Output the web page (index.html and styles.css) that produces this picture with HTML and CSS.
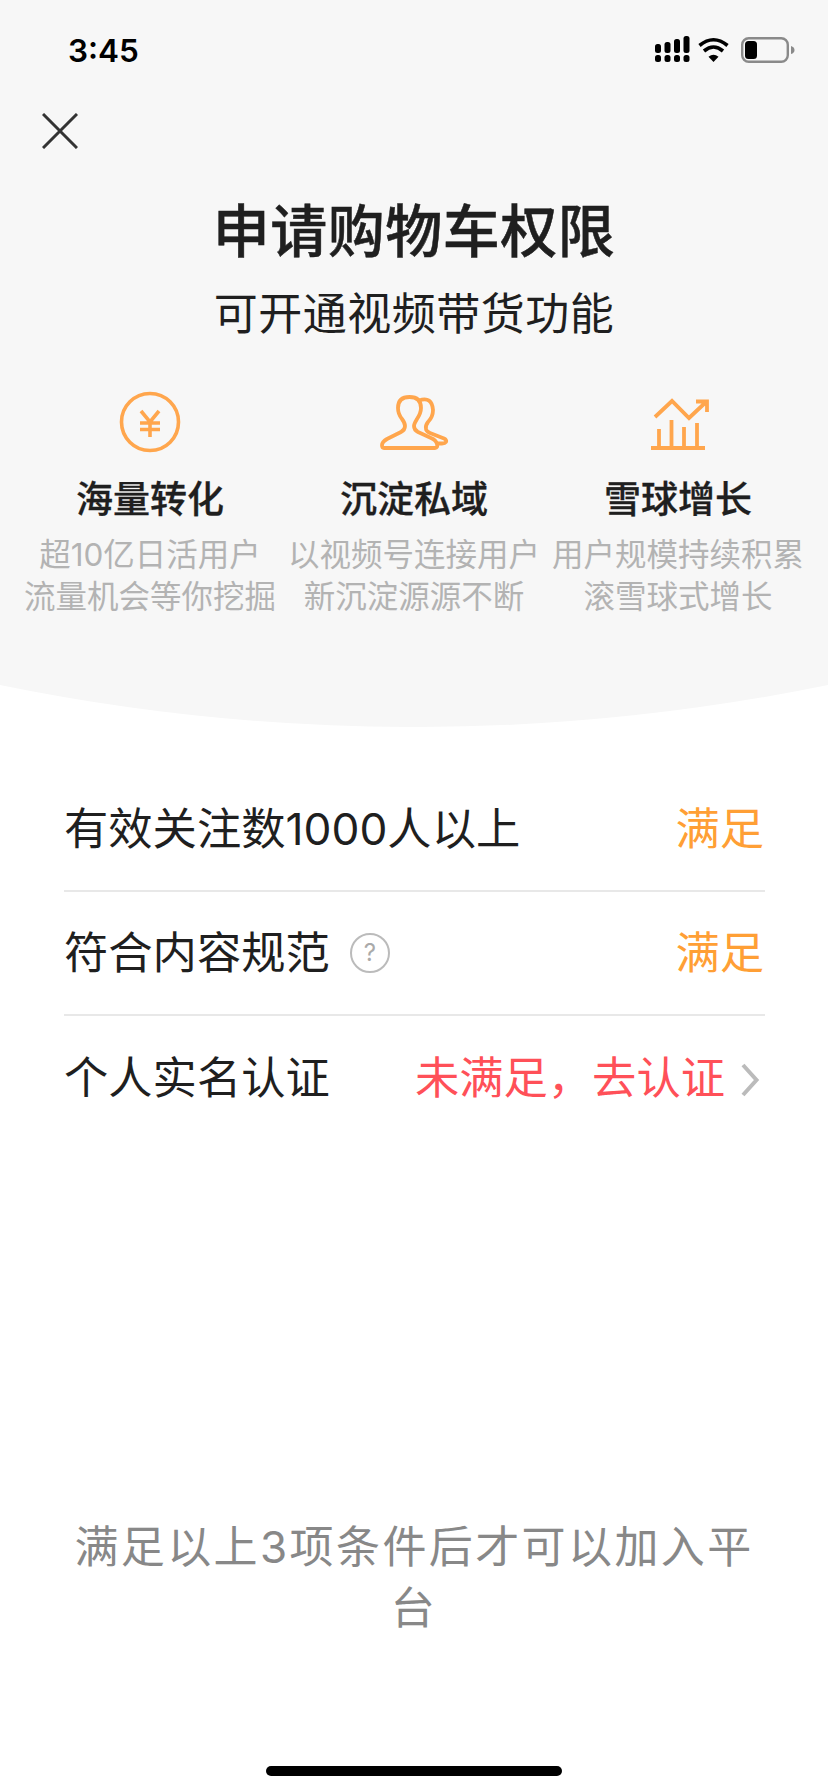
FILE: index.html
```html
<!DOCTYPE html>
<html lang="zh-CN">
<head>
<meta charset="utf-8">
<title>申请购物车权限</title>
<link rel="stylesheet" href="styles.css">
</head>
<body>
<div class="page">
  <header class="hero">
    <div class="status">
      <span class="time">3:45</span>
      <svg class="status-icons" width="142" height="30" viewBox="0 0 142 30">
        <g fill="#000">
          <rect x="0" y="9" width="6" height="9" rx="2.5"/><rect x="0" y="20" width="6" height="7" rx="2.5"/>
          <rect x="9.5" y="7" width="6" height="11" rx="2.5"/><rect x="9.5" y="20" width="6" height="7" rx="2.5"/>
          <rect x="19" y="4" width="6" height="14" rx="2.5"/><rect x="19" y="20" width="6" height="7" rx="2.5"/>
          <rect x="28.5" y="1" width="6" height="17" rx="2.5"/><rect x="28.5" y="20" width="6" height="7" rx="2.5"/>
          <path d="M58.5 27 L53.5 21.8 Q58.5 17.8 63.5 21.8 Z"/>
        </g>
        <g fill="none" stroke="#000" stroke-width="3.6">
          <path d="M44.5 10.5 Q58.5 -1 72.5 10.5"/>
          <path d="M49 16 Q58.5 8 68 16"/>
        </g>
        <rect x="87.2" y="3.2" width="45.6" height="23.6" rx="6.5" fill="none" stroke="#8a8a8a" stroke-width="2.4"/>
        <rect x="90" y="6" width="12" height="18" rx="3.5" fill="#000"/>
        <path d="M136 11 Q139.5 12 139.5 15 Q139.5 18 136 19 Z" fill="#8a8a8a"/>
      </svg>
    </div>
    <button class="close" aria-label="关闭">
      <svg width="36" height="36" viewBox="0 0 36 36"><path d="M1 1 L35 35 M35 1 L1 35" stroke="#333" stroke-width="3" fill="none"/></svg>
    </button>
    <h1 class="title">申请购物车权限</h1>
    <p class="subtitle">可开通视频带货功能</p>
    <div class="features">
      <section class="feature">
        <svg class="feature-icon" width="100" height="80" viewBox="10 1 100 80" fill="none" stroke="#ffa64d" stroke-width="3.6">
          <circle cx="60" cy="41" r="28.5"/>
          <path d="M51 30 L60 41 L69 30 M50 42 H70 M50 48.5 H70 M60 41 V56"/>
        </svg>
        <h2 class="feature-title">海量转化</h2>
        <p class="feature-desc">超10亿日活用户<br>流量机会等你挖掘</p>
      </section>
      <section class="feature">
        <svg class="feature-icon" width="100" height="80" viewBox="4 1 100 80" fill="none" stroke="#ffa64d" stroke-width="3.8" stroke-linejoin="round">
          <path d="M24 67 H75 Q78 67 77 63 Q76 59 71 57 L58 51 Q54 49 54 45 Q54 43 57 38 Q61 32 61 27 Q61 16 49.5 16 Q38 16 38 27 Q38 33 42 38 Q45 42 45 45 Q45 49 41 51 L27 58 Q22 61 22 64 Q22 67 24 67 Z"/>
          <path d="M59 19.5 Q72 15 73 29 Q73 36 68 41 Q65 45 66 48 Q66 50 70 52 L84 57.5 Q87 59 86 61 Q85 62.5 82 62.5 H76"/>
        </svg>
        <h2 class="feature-title">沉淀私域</h2>
        <p class="feature-desc">以视频号连接用户<br>新沉淀源源不断</p>
      </section>
      <section class="feature">
        <svg class="feature-icon" width="100" height="80" viewBox="-2 1 100 80" fill="none" stroke="#ffa64d" stroke-width="3.8">
          <path d="M21 67 H75 M29 48 V67 M41.5 39 V67 M54 46 V67 M67 42 V67"/>
          <path d="M25 36 L42 20 L59 37 L75.5 21.5 M66 20.5 H77 V31"/>
        </svg>
        <h2 class="feature-title">雪球增长</h2>
        <p class="feature-desc">用户规模持续积累<br>滚雪球式增长</p>
      </section>
    </div>
  </header>
  <svg class="curve" width="828" height="42" viewBox="0 0 828 42" preserveAspectRatio="none"><path d="M0 0 H828 A2061 2061 0 0 1 0 0 Z" fill="#f7f7f7"/></svg>

  <main class="rows">
    <div class="row">
      <span class="row-label">有效关注数1000人以上</span>
      <span class="state ok">满足</span>
    </div>
    <div class="row">
      <span class="row-label">符合内容规范<span class="help">?</span></span>
      <span class="state ok">满足</span>
    </div>
    <div class="row">
      <span class="row-label">个人实名认证</span>
      <span class="state bad">未满足，去认证
        <svg class="chevron" width="20" height="34" viewBox="0 0 20 34"><path d="M3 2 L16.5 17 L3 32" fill="none" stroke="#bbb" stroke-width="4"/></svg>
      </span>
    </div>
  </main>

  <footer class="foot">
    <p class="note">满足以上3项条件后才可以加入平台</p>
    <div class="home-bar"></div>
  </footer>
</div>
</body>
</html>
```
FILE: styles.css
```css
* { box-sizing: border-box; }
html, body { margin: 0; padding: 0; background: #fff; }
body {
  font-family: "Inter", "Noto Sans CJK SC", sans-serif;
  color: #1f1f1f;
}
.page {
  width: 828px;
  height: 1792px;
  display: flex;
  flex-direction: column;
  overflow: hidden;
}
.hero {
  background: #f7f7f7;
  height: 685px;
  flex: none;
}
.status {
  height: 98px;
  padding: 32px 31px 0 68px;
  display: flex;
  justify-content: space-between;
  align-items: flex-start;
}
.time {
  font-size: 31.5px;
  line-height: 38px;
  font-weight: 600;
  color: #000;
}
.status-icons { margin-top: 3px; }
.close {
  display: block;
  margin: 15px 0 0 42px;
  padding: 0;
  width: 36px;
  height: 36px;
  border: 0;
  background: none;
}
.title {
  margin: 43px 0 0;
  font-size: 57px;
  line-height: 80px;
  font-weight: 500;
  -webkit-text-stroke: 0.5px #1f1f1f;
  letter-spacing: 0.5px;
  text-align: center;
}
.subtitle {
  margin: 10px 0 0;
  font-size: 44px;
  line-height: 64px;
  font-weight: 400;
  letter-spacing: 0.5px;
  text-align: center;
}
.features {
  margin-top: 36px;
  padding: 0 18px 0 18px;
  display: grid;
  grid-template-columns: repeat(3, 264px);
}
.feature {
  display: flex;
  flex-direction: column;
  align-items: center;
}
.feature-icon { display: block; }
.feature-title {
  margin: 13px 0 0;
  font-size: 37px;
  line-height: 50px;
  font-weight: 500;
  -webkit-text-stroke: 0.3px #1f1f1f;
}
.feature-desc {
  margin: 9px 0 0;
  font-size: 31.5px;
  line-height: 42px;
  color: #b3b3b3;
  text-align: center;
  white-space: nowrap;
}
.curve { display: block; flex: none; }
.rows {
  margin: 41px 63px 0 64px;
}
.row {
  height: 124px;
  display: flex;
  align-items: center;
  justify-content: space-between;
  border-bottom: 2px solid #e8e8e8;
  font-size: 44.3px;
}
.row:last-child { border-bottom: 0; }
.row-label {
  display: flex;
  align-items: center;
  line-height: 60px;
}
.help {
  width: 40px;
  height: 40px;
  margin-left: 20px;
  border: 2.5px solid #bbb;
  border-radius: 50%;
  font-size: 24px;
  line-height: 35px;
  color: #aaa;
  text-align: center;
}
.state { line-height: 60px; white-space: nowrap; display: flex; align-items: center; }
.ok { color: #ff9f35; padding-right: 1px; }
.bad { color: #ff5058; }
.chevron { margin: 4px 5px 0 15px; }
.foot {
  margin-top: auto;
  display: flex;
  flex-direction: column;
  align-items: center;
}
.note {
  margin: 0 0 127px;
  padding: 0 64px;
  font-size: 44px;
  line-height: 61px;
  letter-spacing: 2.4px;
  color: #888;
  text-align: center;
}
.home-bar {
  width: 296px;
  height: 10px;
  margin-bottom: 16px;
  background: #000;
  border-radius: 5px;
}
```
